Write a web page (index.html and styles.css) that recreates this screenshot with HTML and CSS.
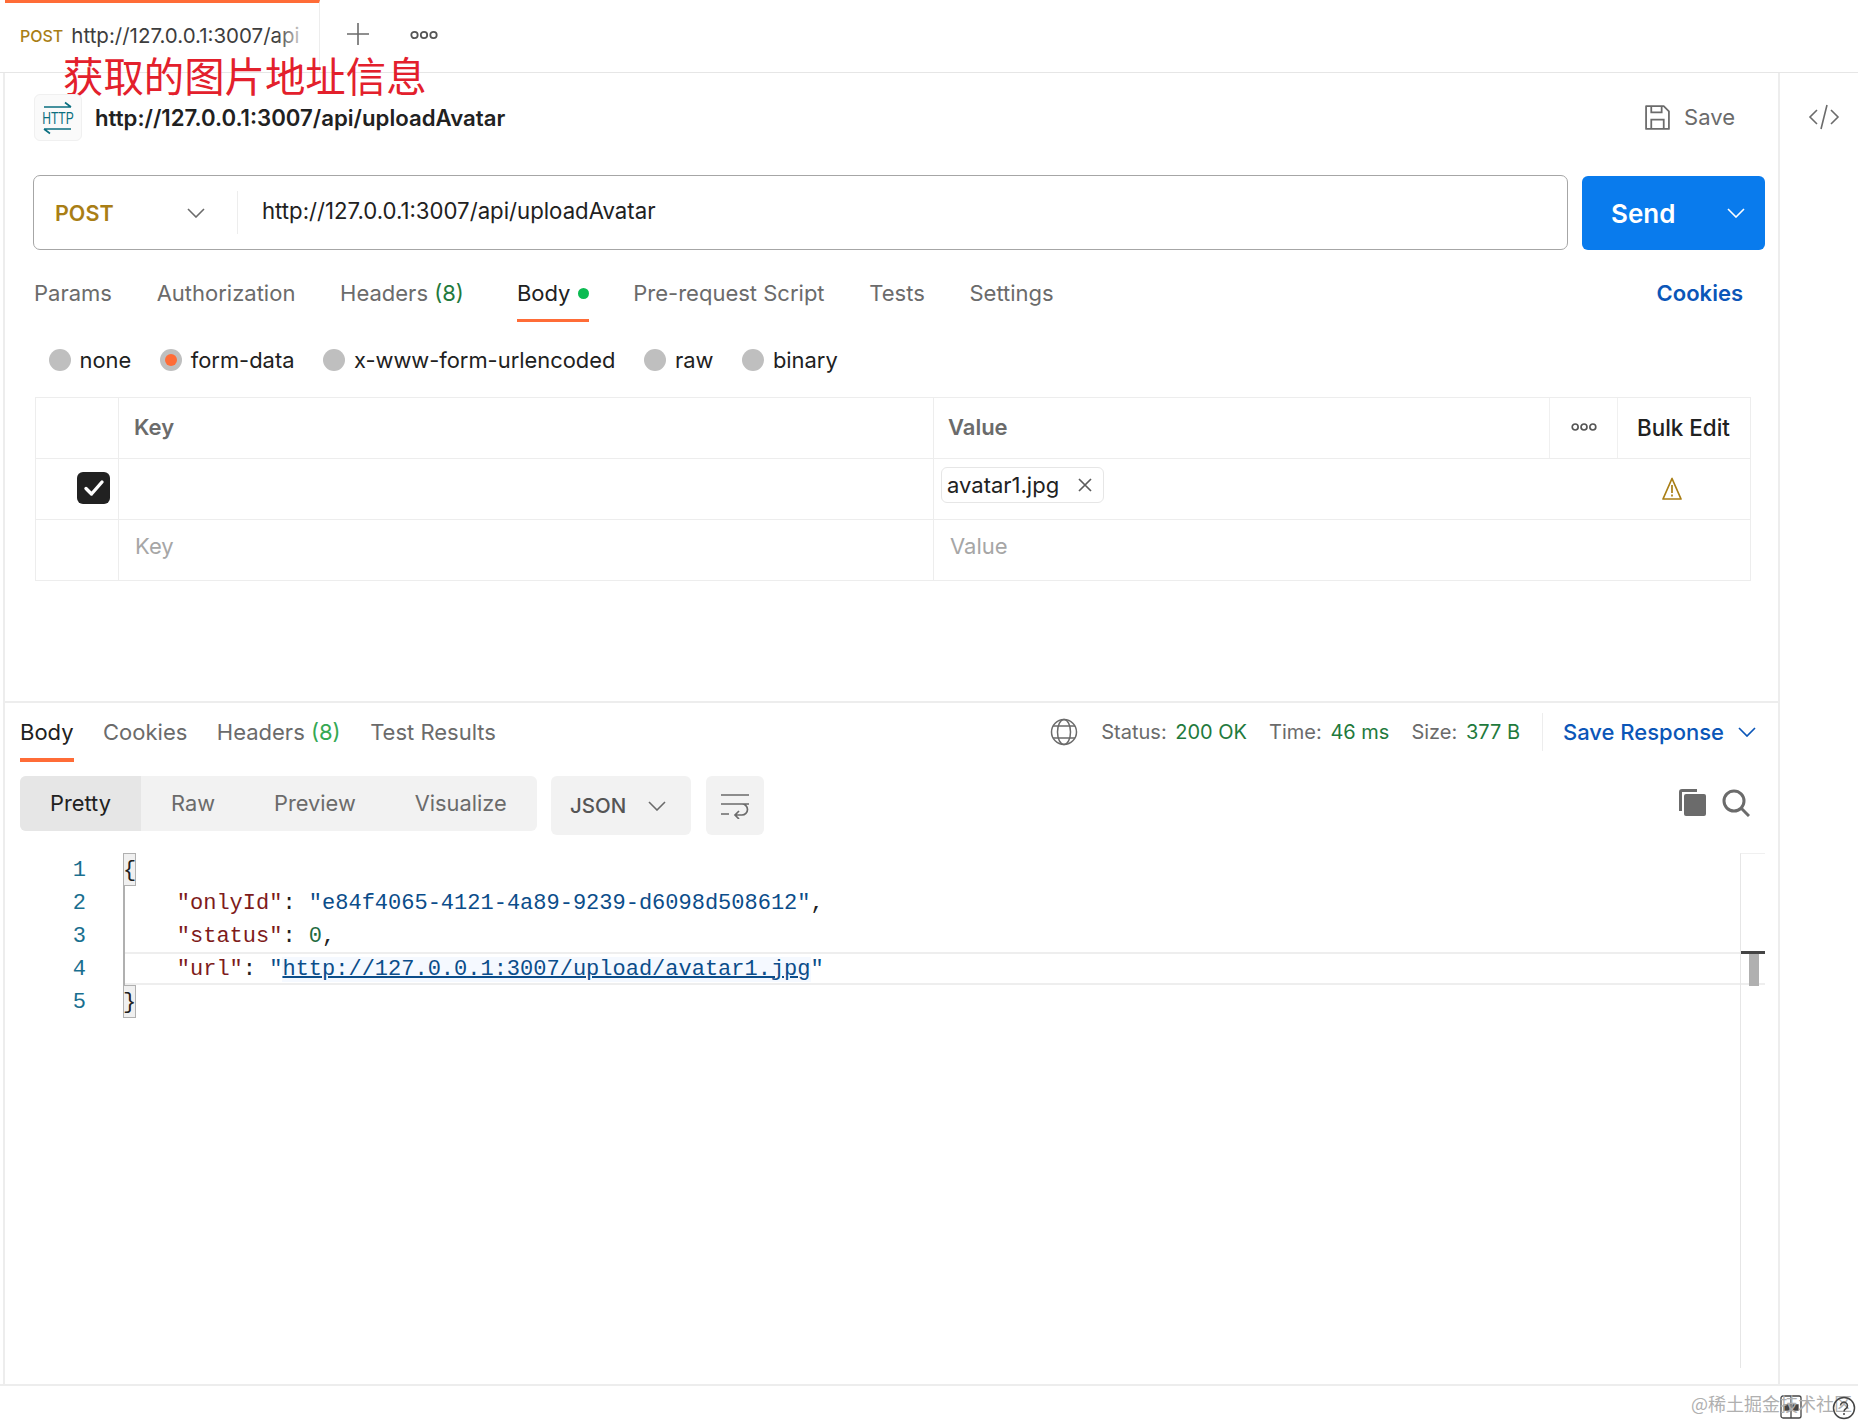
FILE: index.html
```html
<!DOCTYPE html>
<html lang="en">
<head>
<meta charset="utf-8">
<title>Postman</title>
<link rel="stylesheet" href="styles.css">
</head>
<body>
<div class="app">
  <header class="tabbar">
    <div class="tab">
      <span class="tab-method">POST</span>
      <span class="tab-url">http://127.0.0.1:3007/api</span>
    </div>
    <svg class="tab-plus" width="26" height="26" viewBox="0 0 26 26"><path d="M13 2v22M2 13h22" stroke="#6b6b6b" stroke-width="1.6" fill="none"/></svg>
    <svg class="dots tab-dots" width="28" height="10" viewBox="0 0 28 10"><circle cx="4.5" cy="5" r="3.2"/><circle cx="14" cy="5" r="3.2"/><circle cx="23.5" cy="5" r="3.2"/></svg>
    <div class="annotation">获取的图片地址信息</div>
  </header>

  <div class="workspace">
    <main class="main">
      <section class="request">
        <div class="title-row">
          <div class="http-badge">
            <svg width="34" height="34" viewBox="0 0 34 34"><path d="M3 6h27M24 1.500l6 4.500M3 28h27M3 28l6 4.500" stroke="#0a6f80" stroke-width="1.600" fill="none"/></svg>
            <span class="http-text">HTTP</span>
          </div>
          <h1 class="title">http://127.0.0.1:3007/api/uploadAvatar</h1>
          <div class="save">
            <svg width="27" height="27" viewBox="0 0 26 26" fill="none" stroke="#6b6b6b" stroke-width="1.700"><path d="M2 2h17l5 5v17H2z" stroke-linejoin="round"/><path d="M7 2v6h10V2M7 24v-9h12v9"/></svg>
            <span class="save-label">Save</span>
          </div>
        </div>

        <div class="url-row">
          <div class="url-box">
            <div class="method">
              <span class="method-name">POST</span>
              <svg class="chev" width="18" height="10" viewBox="0 0 18 10"><path d="M1 1l8 8 8-8" stroke="#6b6b6b" stroke-width="1.600" fill="none"/></svg>
            </div>
            <div class="url-text">http://127.0.0.1:3007/api/uploadAvatar</div>
          </div>
          <button class="send">
            <span>Send</span>
            <svg width="18" height="10" viewBox="0 0 18 10"><path d="M1 1l8 8 8-8" stroke="#fff" stroke-width="1.600" fill="none"/></svg>
          </button>
        </div>

        <nav class="req-tabs">
          <span class="rt rt-params">Params</span>
          <span class="rt rt-next">Authorization</span>
          <span class="rt rt-next">Headers <em class="count">(8)</em></span>
          <span class="rt rt-body active">Body <i class="dot"></i></span>
          <span class="rt rt-next">Pre-request Script</span>
          <span class="rt rt-next">Tests</span>
          <span class="rt rt-next">Settings</span>
          <span class="rt-cookies">Cookies</span>
        </nav>

        <div class="radios">
          <label class="radio"><i class="circle"></i>none</label>
          <label class="radio"><i class="circle on"></i>form-data</label>
          <label class="radio"><i class="circle"></i>x-www-form-urlencoded</label>
          <label class="radio"><i class="circle"></i>raw</label>
          <label class="radio"><i class="circle"></i>binary</label>
        </div>

        <div class="table">
          <div class="row head">
            <div class="c c-check"></div>
            <div class="c c-key">Key</div>
            <div class="c c-val">Value</div>
            <div class="c c-more">
              <svg class="dots" width="26" height="10" viewBox="0 0 28 10"><circle cx="4.500" cy="5" r="3.200"/><circle cx="14" cy="5" r="3.200"/><circle cx="23.500" cy="5" r="3.200"/></svg>
            </div>
            <div class="c c-bulk">Bulk Edit</div>
          </div>
          <div class="row">
            <div class="c c-check">
              <span class="checkbox"><svg width="22" height="18" viewBox="0 0 22 18"><path d="M3 9.500l5.500 5.500L19 3" stroke="#fff" stroke-width="3.400" fill="none" stroke-linecap="round" stroke-linejoin="round"/></svg></span>
            </div>
            <div class="c c-key"></div>
            <div class="c c-val c-file">
              <span class="chip">avatar1.jpg
                <svg width="16" height="16" viewBox="0 0 16 16"><path d="M2 2l12 12M14 2L2 14" stroke="#5c5c5c" stroke-width="1.700"/></svg>
              </span>
            </div>
            <div class="c c-warn">
              <svg width="22" height="24" viewBox="0 0 22 24" fill="none" stroke="#a97e15" stroke-width="1.700"><path d="M11 1.500L2 22h18z" stroke-linejoin="round"/><path d="M11 8v8M11 17.500v2"/></svg>
            </div>
          </div>
          <div class="row row-last">
            <div class="c c-check"></div>
            <div class="c c-key ph">Key</div>
            <div class="c c-val ph">Value</div>
            <div class="c c-warn"></div>
          </div>
        </div>
      </section>

      <section class="response">
        <div class="res-top">
          <nav class="res-tabs">
            <span class="st active">Body</span>
            <span class="st">Cookies</span>
            <span class="st">Headers <em class="count bright">(8)</em></span>
            <span class="st">Test Results</span>
          </nav>
          <div class="res-meta">
            <svg class="globe" width="28" height="28" viewBox="0 0 28 28" fill="none" stroke="#6b6b6b" stroke-width="1.500"><circle cx="14" cy="14" r="12.500"/><ellipse cx="14" cy="14" rx="6.500" ry="12.500"/><path d="M3 8h22M3 20h22"/></svg>
            <span class="m">Status: <b>200 OK</b></span>
            <span class="m">Time: <b>46 ms</b></span>
            <span class="m">Size: <b>377 B</b></span>
            <span class="save-res">Save Response
              <svg width="18" height="10" viewBox="0 0 18 10"><path d="M1 1l8 8 8-8" stroke="#0b56b8" stroke-width="1.700" fill="none"/></svg>
            </span>
          </div>
        </div>

        <div class="toolbar">
          <div class="seg">
            <span class="seg-i seg-on">Pretty</span>
            <span class="seg-i seg-raw">Raw</span>
            <span class="seg-i seg-next">Preview</span>
            <span class="seg-i seg-next">Visualize</span>
          </div>
          <div class="lang">JSON
            <svg width="18" height="10" viewBox="0 0 18 10"><path d="M1 1l8 8 8-8" stroke="#6b6b6b" stroke-width="1.600" fill="none"/></svg>
          </div>
          <div class="wrap-btn">
            <svg width="30" height="26" viewBox="0 0 30 26" fill="none" stroke="#6b6b6b" stroke-width="1.700"><path d="M1 2h28M1 11h28H22a5 5 0 0 1 0 11h-7M19 18l-4 4 4 4M1 21h8"/></svg>
          </div>
          <div class="tools">
            <svg width="28" height="27" viewBox="0 0 28 27"><path d="M0 3a3 3 0 0 1 3-3h15v3H3v19H0z" fill="#6b6b6b"/><rect x="5" y="5" width="22" height="22" rx="2" fill="#6b6b6b"/></svg>
            <svg width="28" height="28" viewBox="0 0 28 28" fill="none" stroke="#6b6b6b" stroke-width="3"><circle cx="12" cy="12" r="10"/><path d="M19 19l8 8"/></svg>
          </div>
        </div>

        <div class="code">
          <div class="lines">
            <div class="line"><span class="ln">1</span><span class="lc"><span class="brace">{</span></span></div>
            <div class="line"><span class="ln">2</span><span class="lc guide">    <span class="k">"onlyId"</span>: <span class="s">"e84f4065-4121-4a89-9239-d6098d508612"</span>,</span></div>
            <div class="line"><span class="ln">3</span><span class="lc guide">    <span class="k">"status"</span>: <span class="n">0</span>,</span></div>
            <div class="line"><span class="ln">4</span><span class="lc guide cur">    <span class="k">"url"</span>: <span class="s">"<a class="link">http://127.0.0.1:3007/upload/avatar1.jpg</a>"</span></span></div>
            <div class="line"><span class="ln">5</span><span class="lc"><span class="brace">}</span></span></div>
          </div>
          <div class="rail"><i class="rail-tick"></i><i class="rail-thumb"></i></div>
        </div>
      </section>
    </main>

    <aside class="side">
      <svg width="32" height="26" viewBox="0 0 32 26" fill="none" stroke="#6b6b6b" stroke-width="1.600"><path d="M9 6l-7 7 7 7M23 6l7 7-7 7M19 1l-6 24"/></svg>
    </aside>
  </div>

  <footer class="status">
    <svg class="st-split" width="22" height="24" viewBox="0 0 22 24" fill="none" stroke="#444" stroke-width="1.300"><rect x="1" y="1" width="20" height="22" rx="2"/><path d="M11 1v22"/><path d="M4 10h5v5H4zM13 10h5v5h-5z" fill="#444"/></svg>
    <span class="watermark">@稀土掘金技术社区</span>
    <svg class="st-help" width="24" height="24" viewBox="0 0 24 24" fill="none" stroke="#444" stroke-width="1.500"><circle cx="12" cy="12" r="10.500"/><path d="M8.500 9.500a3.500 3.500 0 1 1 5.500 3c-1.300 .8-2 1.500-2 3M12 17v2"/></svg>
  </footer>
</div>
</body>
</html>
```
FILE: styles.css
```css
* { box-sizing: border-box; }
html, body { margin: 0; padding: 0; background: #fff; }
body { font-family: Inter, "Noto Sans", sans-serif; color: #212121; font-size: 22px; overflow: hidden; }
em { font-style: normal; }
.app { width: 1858px; height: 1421px; display: flex; flex-direction: column; overflow: hidden; }

/* top tabs */
.tabbar { position: relative; height: 73px; flex: none; display: flex; align-items: center; border-bottom: 1px solid #e6e6e6; padding-left: 5px; }
.tab { width: 315px; height: 72px; border-top: 3px solid #ff6c37; border-right: 1px solid #ededed; background: #fff; display: flex; align-items: center; padding: 0 0 4px 15px; gap: 8px; overflow: hidden; white-space: nowrap; position: relative; }
.tab::after { content: ""; position: absolute; right: 0; top: 0; bottom: 0; width: 42px; background: linear-gradient(90deg, rgba(255,255,255,0), #fff 75%); }
.tab-method { font-size: 16px; font-weight: 500; color: #a97e15; }
.tab-url { font-size: 20.500px; color: #3d3d3d; }
.tab-plus { margin: -4px 0 0 25px; }
.dots { fill: none; stroke: #555; stroke-width: 1.800; }
.tab-dots { margin: -2px 0 0 39px; }
.annotation { position: absolute; left: 63px; top: 50px; font-family: "Noto Sans CJK SC", sans-serif; font-size: 40.400px; line-height: 50px; color: #e3202c; white-space: nowrap; }

/* layout */
.workspace { flex: 1; display: flex; min-height: 0; }
.main { width: 1777px; flex: none; margin-left: 3px; border-left: 2px solid #ededed; border-right: 2px solid #ededed; display: flex; flex-direction: column; }
.side { flex: 1; display: flex; justify-content: center; padding-top: 31px; padding-left: 9px; align-items: flex-start; }

/* request */
.request { height: 628px; flex: none; padding: 21px 0 0 28px; }
.title-row { height: 47px; display: flex; align-items: center; padding-right: 43px; margin-left: 1px; }
.http-badge { position: relative; width: 48px; height: 47px; border: 1px solid #f0f0f0; border-radius: 6px; background: #fafafa; display: flex; align-items: center; justify-content: center; flex: none; }
.http-text { position: absolute; left: 0; right: 0; top: 9px; text-align: center; font-family: "Liberation Sans", sans-serif; font-size: 16.500px; line-height: 28px; color: #0a6f80; transform: scaleX(.73); }
.title { flex: 1; margin: 0 0 0 13px; font-size: 22.200px; font-weight: 600; color: #212121; }
.save { display: flex; align-items: center; gap: 13px; color: #6b6b6b; font-size: 22px; }
.save-label { margin-top: -2px; }

.url-row { display: flex; margin-top: 34px; height: 75px; padding-right: 13px; }
.url-box { width: 1535px; height: 75px; border: 1.500px solid #a6a6a6; border-radius: 7px; display: flex; align-items: center; }
.method { width: 204px; height: 43px; display: flex; align-items: center; justify-content: space-between; padding: 0 32px 0 21px; border-right: 1px solid #ededed; }
.method-name { font-size: 21.500px; font-weight: 600; color: #a97e15; }
.url-text { font-size: 22.200px; margin: -4px 0 0 24px; color: #212121; }
.send { margin: 1px 0 0 14px; width: 183px; height: 74px; border: 0; border-radius: 6px; background: #097bed; color: #fff; font: 600 26px Inter, sans-serif; display: flex; align-items: center; justify-content: space-between; padding: 0 20px 0 29px; }

.req-tabs { margin-top: 14px; height: 58px; position: relative; display: flex; color: #6b6b6b; font-size: 22px; }
.rt { height: 58px; padding-top: 3px; border-bottom: 3px solid transparent; display: flex; align-items: center; white-space: pre; }
.rt-params { margin-left: 1px; }
.rt-next { margin-left: 44.700px; }
.rt-body { margin-left: 53px; gap: 1px; }
.rt.active { color: #212121; border-bottom-color: #ff6c37; }
.count { color: #1f7a3d; }
.count.bright { color: #34a853; }
.dot { width: 11px; height: 11px; border-radius: 50%; background: #0cbb52; }
.rt-cookies { margin-left: auto; margin-right: 35px; color: #0b56b8; font-weight: 600; padding-top: 16px; }

.radios { margin-top: 18px; height: 40px; display: flex; align-items: center; color: #212121; font-size: 21.900px; padding-left: 16px; }
.radio { display: flex; align-items: center; gap: 8.500px; margin-right: 29px; }
.circle { width: 22px; height: 22px; border-radius: 50%; background: #bfbfbf; display: block; position: relative; }
.circle.on::after { content: ""; position: absolute; left: 5px; top: 5px; width: 12px; height: 12px; border-radius: 50%; background: #ff6c37; }

.table { margin-top: 17px; width: 1716px; border: 1px solid #ededed; border-bottom: 0; margin-left: 2px; }
.row { display: flex; height: 61px; border-bottom: 1px solid #ededed; align-items: stretch; }
.c { display: flex; align-items: center; font-size: 22px; }
.c-check { width: 83px; flex: none; justify-content: flex-end; padding: 0 8px 2px 0; border-right: 1px solid #ededed; }
.c-key { width: 815px; flex: none; padding-left: 15px; border-right: 1px solid #ededed; }
.c-val { width: 615px; flex: none; padding-left: 14px; }
.head .c { padding-bottom: 2px; }
.head .c-key, .head .c-val { font-weight: 600; color: #6b6b6b; }
.c-more { width: 68px; flex: none; justify-content: center; border-left: 1px solid #f0f0f0; }
.c-bulk { flex: 1; border-left: 1px solid #f0f0f0; padding-left: 19px; font-weight: 500; font-size: 22.400px; color: #212121; white-space: nowrap; }
.ph { color: #a6a6a6; font-weight: 400; }
.row-last .c { padding-bottom: 8px; }
.row-last .c-key { padding-left: 16px; }
.row-last .c-val { padding-left: 16px; }
.checkbox { width: 33px; height: 32px; border-radius: 6px; background: #212121; display: flex; align-items: center; justify-content: center; }
.c-file { padding-left: 7px; align-items: flex-start; padding-top: 8px; }
.chip { display: inline-flex; align-items: center; height: 36px; width: 163px; padding: 0 10px 0 5px; justify-content: space-between; border: 1px solid #e6e6e6; border-radius: 6px; }
.c-warn { flex: 1; padding-left: 112px; }

/* response */
.response { flex: 1; border-top: 2px solid #ededed; padding-left: 15px; display: flex; flex-direction: column; min-height: 0; }
.res-top { height: 59px; display: flex; justify-content: space-between; flex: none; padding-right: 22px; }
.res-tabs { display: flex; gap: 29.500px; color: #6b6b6b; font-size: 22px; }
.st { display: flex; align-items: center; height: 59px; border-bottom: 4px solid transparent; padding-top: 2px; white-space: pre; }
.st.active { color: #212121; border-bottom-color: #ff6c37; }
.res-meta { display: flex; align-items: center; font-size: 20px; color: #6b6b6b; height: 59px; padding-bottom: 2px; }
.globe { margin-right: 23px; }
.m { margin-right: 22px; white-space: pre; }
.m b { font-weight: 400; color: #1f7a3d; margin-left: 3px; }
.save-res { display: flex; align-items: center; gap: 14px; height: 38px; padding-left: 20px; border-left: 1px solid #ededed; color: #0b56b8; font-weight: 500; font-size: 22px; white-space: nowrap; }

.toolbar { display: flex; margin-top: 14px; height: 59px; flex: none; align-items: flex-start; padding-right: 28px; }
.seg { width: 517px; height: 55px; border-radius: 6px; background: #f2f2f2; display: flex; align-items: center; color: #6b6b6b; font-size: 21.800px; overflow: hidden; }
.seg-i { display: flex; align-items: center; height: 55px; padding-bottom: 2px; }
.seg-on { width: 121px; justify-content: center; background: #e6e6e6; color: #212121; }
.seg-raw { margin-left: 30px; }
.seg-next { margin-left: 59px; }
.lang { margin-left: 14px; width: 140px; height: 59px; border-radius: 6px; background: #f2f2f2; display: flex; align-items: center; justify-content: space-between; padding: 0 25px 0 19px; font-weight: 500; color: #555; font-size: 20.500px; }
.wrap-btn { margin-left: 15px; width: 58px; height: 59px; border-radius: 6px; background: #f2f2f2; display: flex; align-items: center; justify-content: center; }
.tools { margin-left: auto; display: flex; gap: 15px; margin-top: 13px; }

.code { flex: 1; margin-top: 18px; margin-bottom: 16px; margin-right: 13px; display: flex; position: relative; font-family: "Liberation Mono", "DejaVu Sans Mono", monospace; font-size: 22px; min-height: 0; }
.lines { flex: 1; }
.line { display: flex; height: 33px; line-height: 35px; white-space: pre; }
.ln { width: 66px; text-align: right; color: #1a6f8f; flex: none; margin-right: 37px; }
.lc { flex: 1; color: #212121; }
.guide { box-shadow: inset 2px 0 0 #b0b0b0; padding-left: 1px; }
.cur { box-shadow: inset 2px 0 0 #b0b0b0, inset 0 2px 0 #eee, inset 0 -2px 0 #eee; margin-right: -25px; position: relative; z-index: 0; }
.brace { display: inline-block; width: 13px; height: 33px; vertical-align: top; background: #f0f0f0; outline: 1px solid #b0b0b0; outline-offset: -1px; text-align: center; overflow: hidden; }
.k { color: #7e1b1b; }
.s { color: #0b4d8a; }
.n { color: #1f6b3f; }
.link { color: #0b4d8a; text-decoration: underline; text-decoration-thickness: 2px; background: #f5f9ff; }
.rail { width: 25px; flex: none; border-left: 1px solid #e6e6e6; border-top: 1px solid #f0f0f0; position: relative; }
.rail-tick { position: absolute; left: 0; top: 97px; width: 24px; height: 3px; background: #444; }
.rail-thumb { position: absolute; left: 8px; top: 100px; width: 10px; height: 32px; background: #b0b0b0; }

/* footer */
.status { height: 37px; flex: none; border-top: 2px solid #ededed; position: relative; }
.watermark { position: absolute; right: 6px; top: 5px; font-family: "Noto Sans CJK SC", sans-serif; font-size: 18px; line-height: 24px; color: #b0b0b0; white-space: nowrap; }
.st-split { position: absolute; left: 1780px; top: 9px; }
.st-help { position: absolute; left: 1832px; top: 10px; }
```
